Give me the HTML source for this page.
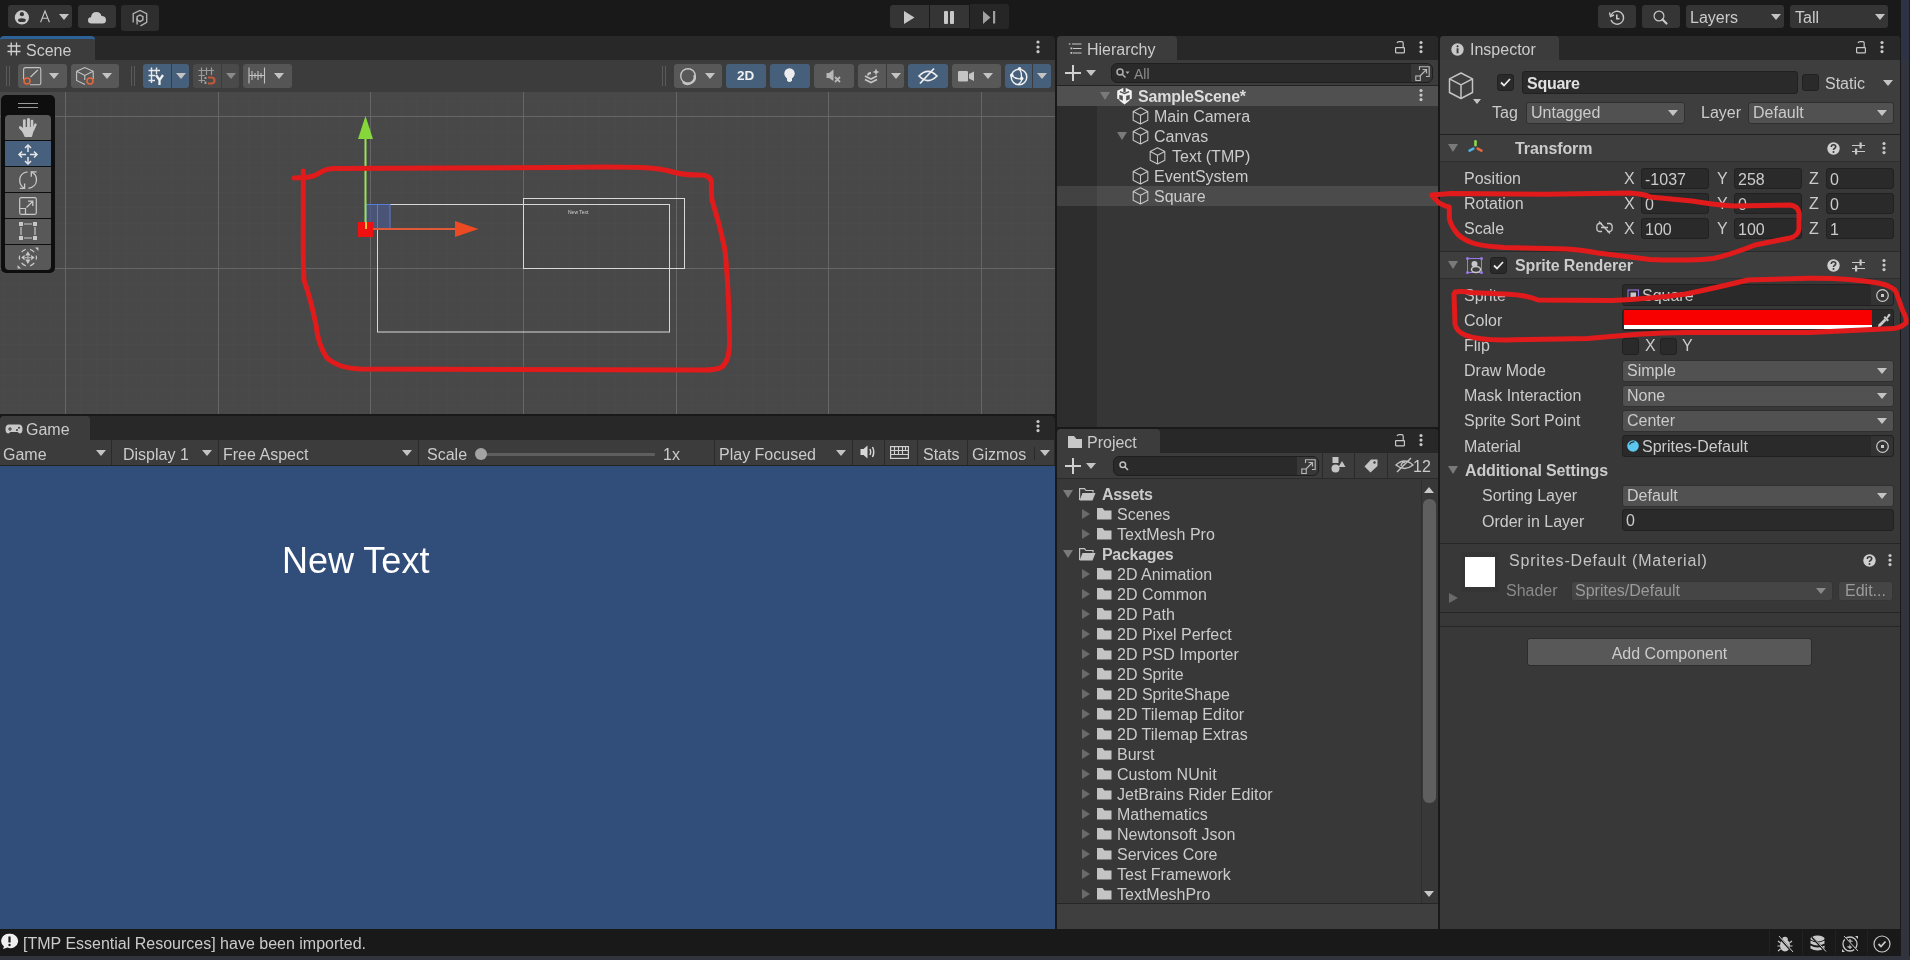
<!DOCTYPE html>
<html><head><meta charset="utf-8">
<style>
*{box-sizing:border-box;margin:0;padding:0}
html,body{width:1910px;height:960px;overflow:hidden;background:#191919;font-family:"Liberation Sans",sans-serif;color:#cbcbcb;font-size:15px;-webkit-font-smoothing:antialiased}
.a{position:absolute}
.t{position:absolute;white-space:pre;letter-spacing:0;line-height:20px;font-size:16px;margin-top:1px}
.btn{position:absolute;background:#353535;border-radius:3px}
.tri{position:absolute;width:0;height:0;border-left:5px solid transparent;border-right:5px solid transparent;border-top:6px solid #c4c4c4}
.trir{position:absolute;width:0;height:0;border-top:5px solid transparent;border-bottom:5px solid transparent;border-left:6px solid #6a6a6a}
.trid{position:absolute;width:0;height:0;border-left:5px solid transparent;border-right:5px solid transparent;border-top:6px solid #6a6a6a}
.panel{position:absolute;background:#383838;border-radius:4px 4px 0 0;overflow:hidden}
.hdr{position:absolute;left:0;top:0;right:0;height:24px;background:#282828}
.tab{position:absolute;left:0;top:0;height:24px;background:#3c3c3c;border-radius:4px 4px 0 0}
.tb{position:absolute;background:#585858;border-radius:3px}
.tbb{position:absolute;background:#46607c;border-radius:3px}
.fld{position:absolute;background:#2a2a2a;border:1px solid #212121;border-radius:3px}
.dd{position:absolute;background:#515151;border:1px solid #303030;border-radius:3px}
svg{position:absolute;overflow:visible}
</style></head><body><div id="root" style="position:absolute;left:0;top:0;width:1910px;height:960px;will-change:transform">

<!-- right window strip -->
<div class="a" style="left:1901px;top:0;width:8px;height:960px;background:#32343d"></div>
<div class="a" style="left:1901px;top:0;width:8px;height:60px;background:#2e3245"></div>
<div class="a" style="left:1909px;top:0;width:1px;height:960px;background:#1e1e1e"></div>
<div class="a" style="left:0;top:956px;width:1910px;height:4px;background:#32343d"></div>

<!-- ============ TOP TOOLBAR ============ -->
<div class="btn" style="left:8px;top:5px;width:64px;height:23px"></div>
<svg style="left:14px;top:10px" width="16" height="16" viewBox="0 0 16 16"><circle cx="7.9" cy="7.4" r="7.1" fill="#c8c8c8"/><circle cx="7.9" cy="4.2" r="2.1" fill="#353535"/><ellipse cx="7.9" cy="10.2" rx="3.9" ry="1.9" fill="#353535"/></svg>
<svg style="left:40px;top:10px" width="11" height="13" viewBox="0 0 11 13"><path d="M0.6 12.3L5 1L9.4 12.3M2.1 8.3H7.9" fill="none" stroke="#c8c8c8" stroke-width="1.1"/></svg>
<div class="tri" style="left:59px;top:14px"></div>
<div class="btn" style="left:78px;top:5px;width:38px;height:23px"></div>
<svg style="left:88px;top:11px" width="18" height="13" viewBox="0 0 18 13"><path d="M3.5 12.5 Q0 12.5 0 9.3 Q0 6.5 3 6.3 Q3.5 1 8.5 1 Q12.5 1 13.5 5 Q18 5 18 9 Q18 12.5 14.5 12.5Z" fill="#c8c8c8"/></svg>
<div class="btn" style="left:121px;top:5px;width:38px;height:26px;background:#2e2e2e"></div>
<svg style="left:132px;top:9px" width="16" height="18" viewBox="0 0 16 18"><path d="M1.2 13.6V4.7L8 1.4L14.7 4.7V13.3L8.5 16.9" fill="none" stroke="#b4b4b4" stroke-width="1.3"/><path d="M8 6L10.9 7.65V10.95L8 12.6L5.1 10.95V7.65Z" fill="none" stroke="#b4b4b4" stroke-width="1.4"/><path d="M5.1 9V15.5" stroke="#b4b4b4" stroke-width="1.4"/></svg>

<div class="btn" style="left:890px;top:5px;width:39px;height:23px;border-radius:3px 0 0 3px"></div>
<svg style="left:904px;top:11px" width="11" height="13" viewBox="0 0 11 13"><path d="M0 0 L10.5 6.5 L0 13Z" fill="#c8c8c8"/></svg>
<div class="btn" style="left:930px;top:5px;width:39px;height:23px;border-radius:0"></div>
<div class="a" style="left:944px;top:11px;width:3.5px;height:13px;background:#c8c8c8;border-radius:1px"></div>
<div class="a" style="left:950px;top:11px;width:4px;height:13px;background:#c8c8c8;border-radius:1px"></div>
<div class="btn" style="left:970px;top:4px;width:39px;height:25px;background:#262626;border-radius:0 3px 3px 0"></div>
<svg style="left:983px;top:11px" width="13" height="13" viewBox="0 0 13 13"><path d="M0 0 L7.5 6.5 L0 13Z" fill="#a0a0a0"/><rect x="10" y="0" width="2.2" height="12.5" fill="#a0a0a0"/></svg>

<div class="btn" style="left:1598px;top:5px;width:38px;height:23px"></div>
<svg style="left:1609px;top:10px" width="16" height="16" viewBox="0 0 16 16"><path d="M2.2 5 A6.5 6.5 0 1 1 2 10" fill="none" stroke="#c8c8c8" stroke-width="1.4"/><path d="M0.5 2.5 L1.5 6.5 L5 5" fill="none" stroke="#c8c8c8" stroke-width="1.4"/><path d="M7.8 4.5 V8.8 H10.5" fill="none" stroke="#c8c8c8" stroke-width="1.6"/></svg>
<div class="btn" style="left:1642px;top:5px;width:38px;height:23px"></div>
<svg style="left:1653px;top:10px" width="16" height="15" viewBox="0 0 16 15"><circle cx="6" cy="6" r="4.9" fill="none" stroke="#c8c8c8" stroke-width="1.2"/><path d="M9.5 9.5 L13.5 13.5" stroke="#c8c8c8" stroke-width="2.2" stroke-linecap="round"/></svg>
<div class="btn" style="left:1686px;top:5px;width:98px;height:23px"></div>
<div class="t" style="left:1690px;top:7px">Layers</div>
<div class="tri" style="left:1771px;top:14px"></div>
<div class="btn" style="left:1790px;top:5px;width:98px;height:23px"></div>
<div class="t" style="left:1795px;top:7px">Tall</div>
<div class="tri" style="left:1875px;top:14px"></div>

<!-- ============ SCENE PANEL ============ -->
<div class="a" style="left:0;top:36px;width:1055px;height:24px;background:#282828;border-radius:4px 4px 0 0"></div>
<div class="a" style="left:0;top:36px;width:95px;height:24px;background:#3c3c3c;border-top:3px solid #2c6296;border-radius:4px 4px 0 0"></div>
<svg style="left:7px;top:42px" width="14" height="14" viewBox="0 0 14 14"><path d="M4.2 0.5V13.5M9.5 0.5V13.5M0.5 4H13.5M0.5 9.5H13.5" stroke="#d0d0d0" stroke-width="1.3"/></svg>
<div class="t" style="left:26px;top:40px">Scene</div>
<svg style="left:1036px;top:40px" width="4" height="14" viewBox="0 0 4 14"><circle cx="2" cy="2" r="1.6" fill="#c8c8c8"/><circle cx="2" cy="7" r="1.6" fill="#c8c8c8"/><circle cx="2" cy="11.7" r="1.6" fill="#c8c8c8"/></svg>
<div class="a" style="left:0;top:60px;width:1055px;height:32px;background:#3c3c3c"></div>
<div class="a" style="left:6px;top:66px;width:1px;height:20px;background:#5a5a5a"></div>
<div class="a" style="left:9px;top:66px;width:1px;height:20px;background:#5a5a5a"></div>
<div class="tb" style="left:18px;top:64px;width:49px;height:24px"></div>
<svg style="left:23px;top:67px" width="20" height="20" viewBox="0 0 20 20"><path d="M0.6 12.5V2.5Q0.6 0.6 2.5 0.6H16Q17.8 0.6 17.8 2.5V16Q17.8 17.8 16 17.8H7" fill="none" stroke="#c4c4c4" stroke-width="1.1"/><path d="M7.5 10L14.8 3" stroke="#c4c4c4" stroke-width="1.2"/><circle cx="4" cy="14" r="3" fill="none" stroke="#e8683a" stroke-width="1.5"/></svg>
<div class="tri" style="left:49px;top:73px"></div>
<div class="tb" style="left:71px;top:64px;width:48px;height:24px"></div>
<svg style="left:76px;top:67px" width="20" height="20" viewBox="0 0 20 20"><path d="M0.6 4.3L8.8 0.5L17.2 4.3V12M0.6 4.3V13.5L9 17.6M0.6 4.3L8.8 8.5L17.2 4.3M8.8 8.5V13" fill="none" stroke="#c4c4c4" stroke-width="1.1"/><circle cx="14" cy="14" r="3" fill="none" stroke="#e8683a" stroke-width="1.5"/></svg>
<div class="tri" style="left:102px;top:73px"></div>
<div class="a" style="left:131px;top:66px;width:1px;height:20px;background:#5a5a5a"></div>
<div class="a" style="left:134px;top:66px;width:1px;height:20px;background:#5a5a5a"></div>
<div class="tbb" style="left:143px;top:64px;width:28px;height:24px;border-radius:3px 0 0 3px"></div>
<div class="tbb" style="left:172px;top:64px;width:17px;height:24px;border-radius:0 3px 3px 0"></div>
<svg style="left:148px;top:67px" width="18" height="19" viewBox="0 0 18 19"><path d="M3.5 0.5V16M8.5 0.5V7M0.5 3.5H12M0.5 8.5H7M0.5 13.5H7" stroke="#e8e8e8" stroke-width="1.4"/><path d="M8 8L11.5 13M15 8L11.5 13V18" fill="none" stroke="#f0f0f0" stroke-width="2.3"/></svg>
<div class="tri" style="left:176px;top:73px"></div>
<div class="tb" style="left:193px;top:64px;width:28px;height:24px;background:#4a4a4a;border-radius:3px 0 0 3px"></div>
<div class="tb" style="left:222px;top:64px;width:17px;height:24px;background:#4a4a4a;border-radius:0 3px 3px 0"></div>
<svg style="left:198px;top:67px" width="18" height="19" viewBox="0 0 18 19"><path d="M3.5 0.5V16M8.5 0.5V8M13.5 0.5V8M0.5 3.5H16M0.5 8.5H7M0.5 13.5H7" stroke="#9a9a9a" stroke-width="1.2"/><rect x="6.5" y="10" width="2" height="2" fill="#a0a0a0"/><rect x="6.5" y="14.5" width="2" height="2.5" fill="#a0a0a0"/><path d="M10 10.5H13.5A3 3 0 0 1 13.5 16.5H10" fill="none" stroke="#c0583a" stroke-width="2.2"/></svg>
<div class="trid" style="left:226px;top:73px;border-top-color:#8a8a8a"></div>
<div class="tb" style="left:243px;top:64px;width:49px;height:24px;background:#555"></div>
<svg style="left:248px;top:67px" width="18" height="18" viewBox="0 0 18 18"><path d="M1 0.5V16.5M16.5 0.5V16.5M1 8.5H16.5M4 4V13M7 6V11M10 4V13M13 6V11" stroke="#c4c4c4" stroke-width="1.1"/></svg>
<div class="tri" style="left:274px;top:73px"></div>

<div class="a" style="left:662px;top:66px;width:1px;height:20px;background:#5a5a5a"></div>
<div class="a" style="left:665px;top:66px;width:1px;height:20px;background:#5a5a5a"></div>
<div class="tb" style="left:674px;top:64px;width:48px;height:24px"></div>
<svg style="left:680px;top:67px" width="17" height="18" viewBox="0 0 17 18"><circle cx="8" cy="9" r="7.3" fill="none" stroke="#c4c4c4" stroke-width="1.4"/><path d="M14.5 8A7 7 0 0 1 3 15" fill="none" stroke="#c4c4c4" stroke-width="2.4"/></svg>
<div class="tri" style="left:705px;top:73px"></div>
<div class="tbb" style="left:726px;top:64px;width:40px;height:24px"></div>
<div class="a" style="left:737px;top:64px;font-weight:bold;font-size:13.5px;line-height:24px;color:#f0f0f0">2D</div>
<div class="tbb" style="left:770px;top:64px;width:40px;height:24px"></div>
<svg style="left:784px;top:68px" width="12" height="17" viewBox="0 0 12 17"><circle cx="5.5" cy="5.5" r="5.2" fill="#ececec"/><path d="M3 9.5H8V12.5Q5.5 15.5 3 12.5Z" fill="#ececec"/></svg>
<div class="tb" style="left:814px;top:64px;width:40px;height:24px"></div>
<svg style="left:826px;top:69px" width="16" height="15" viewBox="0 0 16 15"><path d="M0.5 4H3L7.5 0.5V12L3 9H0.5Z" fill="#b8b8b8"/><path d="M9 8L14 13M14 8L9 13" stroke="#b8b8b8" stroke-width="1.8"/></svg>
<div class="tb" style="left:858px;top:64px;width:28px;height:24px;border-radius:3px 0 0 3px"></div>
<div class="tb" style="left:887px;top:64px;width:17px;height:24px;border-radius:0 3px 3px 0"></div>
<svg style="left:864px;top:68px" width="16" height="16" viewBox="0 0 16 16"><path d="M1 8L7 11L13 8M1 11.5L7 14.5L13 11.5" fill="none" stroke="#c4c4c4" stroke-width="1.8"/><path d="M4 7.5Q4 5 7 5" fill="none" stroke="#c4c4c4" stroke-width="1.8"/><path d="M12 0.5L13 3L15.5 4L13 5L12 7.5L11 5L8.5 4L11 3Z" fill="#c4c4c4"/></svg>
<div class="tri" style="left:891px;top:73px"></div>
<div class="tbb" style="left:908px;top:64px;width:40px;height:24px"></div>
<svg style="left:918px;top:68px" width="20" height="16" viewBox="0 0 20 16"><path d="M1 8Q10 -1 19 8Q10 17 1 8Z" fill="none" stroke="#ececec" stroke-width="1.7"/><path d="M2 15.5L16 0.5" stroke="#ececec" stroke-width="1.8"/></svg>
<div class="tb" style="left:952px;top:64px;width:49px;height:24px"></div>
<svg style="left:958px;top:71px" width="17" height="11" viewBox="0 0 17 11"><rect x="0" y="0" width="10" height="10.5" rx="1.2" fill="#c4c4c4"/><path d="M11 3L16 0.5V10L11 7.5Z" fill="#c4c4c4"/></svg>
<div class="tri" style="left:983px;top:73px"></div>
<div class="tbb" style="left:1005px;top:64px;width:27px;height:24px;border-radius:3px 0 0 3px"></div>
<div class="tbb" style="left:1033px;top:64px;width:18px;height:24px;border-radius:0 3px 3px 0"></div>
<svg style="left:1010px;top:67px" width="18" height="19" viewBox="0 0 18 19"><circle cx="9" cy="10" r="7.8" fill="none" stroke="#f0f0f0" stroke-width="1.5"/><path d="M9.5 1.5Q12 6 11.7 11.5M1.5 8.5Q6.5 13 11.7 11.5M11.7 11.5Q12 15 8 17.5" fill="none" stroke="#f0f0f0" stroke-width="1.3"/><circle cx="9.5" cy="1.8" r="1.8" fill="#f0f0f0"/><circle cx="1.8" cy="8.3" r="1.8" fill="#f0f0f0"/><circle cx="11.7" cy="11.5" r="1.8" fill="#f0f0f0"/></svg>
<div class="tri" style="left:1037px;top:73px"></div>

<div class="a" style="left:0;top:92px;width:1055px;height:322px;background:#484848;overflow:hidden">
<svg style="left:0;top:0" width="1055" height="322" viewBox="0 0 1055 322">
<rect x="4" y="0" width="1" height="322" fill="#4a4a4a"/>
<rect x="19" y="0" width="1" height="322" fill="#4a4a4a"/>
<rect x="34" y="0" width="1" height="322" fill="#4a4a4a"/>
<rect x="50" y="0" width="1" height="322" fill="#4a4a4a"/>
<rect x="80" y="0" width="1" height="322" fill="#4a4a4a"/>
<rect x="96" y="0" width="1" height="322" fill="#4a4a4a"/>
<rect x="111" y="0" width="1" height="322" fill="#4a4a4a"/>
<rect x="126" y="0" width="1" height="322" fill="#4a4a4a"/>
<rect x="141" y="0" width="1" height="322" fill="#4a4a4a"/>
<rect x="157" y="0" width="1" height="322" fill="#4a4a4a"/>
<rect x="172" y="0" width="1" height="322" fill="#4a4a4a"/>
<rect x="187" y="0" width="1" height="322" fill="#4a4a4a"/>
<rect x="202" y="0" width="1" height="322" fill="#4a4a4a"/>
<rect x="233" y="0" width="1" height="322" fill="#4a4a4a"/>
<rect x="248" y="0" width="1" height="322" fill="#4a4a4a"/>
<rect x="263" y="0" width="1" height="322" fill="#4a4a4a"/>
<rect x="279" y="0" width="1" height="322" fill="#4a4a4a"/>
<rect x="294" y="0" width="1" height="322" fill="#4a4a4a"/>
<rect x="309" y="0" width="1" height="322" fill="#4a4a4a"/>
<rect x="325" y="0" width="1" height="322" fill="#4a4a4a"/>
<rect x="340" y="0" width="1" height="322" fill="#4a4a4a"/>
<rect x="355" y="0" width="1" height="322" fill="#4a4a4a"/>
<rect x="386" y="0" width="1" height="322" fill="#4a4a4a"/>
<rect x="401" y="0" width="1" height="322" fill="#4a4a4a"/>
<rect x="416" y="0" width="1" height="322" fill="#4a4a4a"/>
<rect x="431" y="0" width="1" height="322" fill="#4a4a4a"/>
<rect x="447" y="0" width="1" height="322" fill="#4a4a4a"/>
<rect x="462" y="0" width="1" height="322" fill="#4a4a4a"/>
<rect x="477" y="0" width="1" height="322" fill="#4a4a4a"/>
<rect x="492" y="0" width="1" height="322" fill="#4a4a4a"/>
<rect x="508" y="0" width="1" height="322" fill="#4a4a4a"/>
<rect x="538" y="0" width="1" height="322" fill="#4a4a4a"/>
<rect x="554" y="0" width="1" height="322" fill="#4a4a4a"/>
<rect x="569" y="0" width="1" height="322" fill="#4a4a4a"/>
<rect x="584" y="0" width="1" height="322" fill="#4a4a4a"/>
<rect x="599" y="0" width="1" height="322" fill="#4a4a4a"/>
<rect x="615" y="0" width="1" height="322" fill="#4a4a4a"/>
<rect x="630" y="0" width="1" height="322" fill="#4a4a4a"/>
<rect x="645" y="0" width="1" height="322" fill="#4a4a4a"/>
<rect x="660" y="0" width="1" height="322" fill="#4a4a4a"/>
<rect x="691" y="0" width="1" height="322" fill="#4a4a4a"/>
<rect x="706" y="0" width="1" height="322" fill="#4a4a4a"/>
<rect x="721" y="0" width="1" height="322" fill="#4a4a4a"/>
<rect x="737" y="0" width="1" height="322" fill="#4a4a4a"/>
<rect x="752" y="0" width="1" height="322" fill="#4a4a4a"/>
<rect x="767" y="0" width="1" height="322" fill="#4a4a4a"/>
<rect x="783" y="0" width="1" height="322" fill="#4a4a4a"/>
<rect x="798" y="0" width="1" height="322" fill="#4a4a4a"/>
<rect x="813" y="0" width="1" height="322" fill="#4a4a4a"/>
<rect x="844" y="0" width="1" height="322" fill="#4a4a4a"/>
<rect x="859" y="0" width="1" height="322" fill="#4a4a4a"/>
<rect x="874" y="0" width="1" height="322" fill="#4a4a4a"/>
<rect x="889" y="0" width="1" height="322" fill="#4a4a4a"/>
<rect x="905" y="0" width="1" height="322" fill="#4a4a4a"/>
<rect x="920" y="0" width="1" height="322" fill="#4a4a4a"/>
<rect x="935" y="0" width="1" height="322" fill="#4a4a4a"/>
<rect x="950" y="0" width="1" height="322" fill="#4a4a4a"/>
<rect x="966" y="0" width="1" height="322" fill="#4a4a4a"/>
<rect x="996" y="0" width="1" height="322" fill="#4a4a4a"/>
<rect x="1012" y="0" width="1" height="322" fill="#4a4a4a"/>
<rect x="1027" y="0" width="1" height="322" fill="#4a4a4a"/>
<rect x="1042" y="0" width="1" height="322" fill="#4a4a4a"/>
<rect x="0" y="9" width="1055" height="1" fill="#4a4a4a"/>
<rect x="0" y="39" width="1055" height="1" fill="#4a4a4a"/>
<rect x="0" y="54" width="1055" height="1" fill="#4a4a4a"/>
<rect x="0" y="70" width="1055" height="1" fill="#4a4a4a"/>
<rect x="0" y="85" width="1055" height="1" fill="#4a4a4a"/>
<rect x="0" y="100" width="1055" height="1" fill="#4a4a4a"/>
<rect x="0" y="115" width="1055" height="1" fill="#4a4a4a"/>
<rect x="0" y="131" width="1055" height="1" fill="#4a4a4a"/>
<rect x="0" y="146" width="1055" height="1" fill="#4a4a4a"/>
<rect x="0" y="161" width="1055" height="1" fill="#4a4a4a"/>
<rect x="0" y="191" width="1055" height="1" fill="#4a4a4a"/>
<rect x="0" y="207" width="1055" height="1" fill="#4a4a4a"/>
<rect x="0" y="222" width="1055" height="1" fill="#4a4a4a"/>
<rect x="0" y="237" width="1055" height="1" fill="#4a4a4a"/>
<rect x="0" y="252" width="1055" height="1" fill="#4a4a4a"/>
<rect x="0" y="267" width="1055" height="1" fill="#4a4a4a"/>
<rect x="0" y="283" width="1055" height="1" fill="#4a4a4a"/>
<rect x="0" y="298" width="1055" height="1" fill="#4a4a4a"/>
<rect x="0" y="313" width="1055" height="1" fill="#4a4a4a"/>
<rect x="65" y="0" width="1" height="322" fill="#666666"/>
<rect x="218" y="0" width="1" height="322" fill="#666666"/>
<rect x="370" y="0" width="1" height="322" fill="#666666"/>
<rect x="523" y="0" width="1" height="322" fill="#666666"/>
<rect x="676" y="0" width="1" height="322" fill="#666666"/>
<rect x="828" y="0" width="1" height="322" fill="#666666"/>
<rect x="981" y="0" width="1" height="322" fill="#666666"/>
<rect x="0" y="24" width="1055" height="1" fill="#666666"/>
<rect x="0" y="176" width="1055" height="1" fill="#666666"/>
</svg>
</div>

<!-- tool panel -->
<div class="a" style="left:1px;top:95px;width:54px;height:178px;background:#0e0e0e;border-radius:5px"></div>
<div class="a" style="left:18px;top:103px;width:20px;height:1px;background:#9a9a9a"></div>
<div class="a" style="left:18px;top:107px;width:20px;height:1px;background:#9a9a9a"></div>
<div class="a" style="left:5px;top:115px;width:46px;height:25px;background:#585858;border-radius:4px 4px 0 0"></div>
<div class="a" style="left:5px;top:141px;width:46px;height:25px;background:#46607e"></div>
<div class="a" style="left:5px;top:167px;width:46px;height:25px;background:#585858"></div>
<div class="a" style="left:5px;top:193px;width:46px;height:25px;background:#585858"></div>
<div class="a" style="left:5px;top:219px;width:46px;height:25px;background:#585858"></div>
<div class="a" style="left:5px;top:245px;width:46px;height:25px;background:#585858;border-radius:0 0 4px 4px"></div>
<svg style="left:19px;top:118px" width="18" height="20" viewBox="0 0 18 20"><g stroke="#c8c8c8" stroke-linecap="round" fill="none"><path d="M5.3 2.6V10" stroke-width="2.7"/><path d="M9.5 1.4V10" stroke-width="2.9"/><path d="M13 3V10" stroke-width="2.6"/><path d="M16.5 6.5L14 12" stroke-width="2.4"/><path d="M1.2 9.5L5 13.5" stroke-width="2.6"/></g><path d="M3.8 9H14.5L14.8 12.5L12.8 19H5.8L3 13Z" fill="#c8c8c8"/></svg>
<svg style="left:18px;top:144px" width="20" height="21" viewBox="0 0 20 21"><path d="M10 1V8M10 13V20M1 10.5H8M12 10.5H19" stroke="#e8e8e8" stroke-width="1.5"/><path d="M7 4L10 1L13 4M7 17L10 20L13 17M4 7.5L1 10.5L4 13.5M16 7.5L19 10.5L16 13.5" fill="none" stroke="#e8e8e8" stroke-width="1.5"/></svg>
<svg style="left:19px;top:171px" width="19" height="19" viewBox="0 0 19 19"><g fill="none" stroke="#c8c8c8" stroke-width="1.3"><path d="M8.5 0.8C3.5 1.5 0.7 5 0.7 9C0.7 12.8 2.8 16 5.6 17.4"/><path d="M0.8 17.4H5.6V12.4"/><path d="M9.4 17.4C14.5 16.6 17.5 13 17.5 9C17.5 5.2 15.3 2 12.3 0.8"/><path d="M17.6 0.8H12.3V5.7"/></g></svg>
<svg style="left:19px;top:197px" width="18" height="18" viewBox="0 0 18 18"><rect x="0.7" y="0.7" width="16.6" height="16.6" rx="1.5" fill="none" stroke="#c8c8c8" stroke-width="1.2"/><path d="M0.7 11.5H6.5V17.3" fill="none" stroke="#c8c8c8" stroke-width="1.2"/><path d="M7.5 10.5L13.5 4.5M9 4.2H13.8V9" fill="none" stroke="#c8c8c8" stroke-width="1.3"/></svg>
<svg style="left:19px;top:222px" width="18" height="18" viewBox="0 0 18 18"><path d="M5 2H13M5 16H13M2 5V13M16 5V13" stroke="#c8c8c8" stroke-width="1.2"/><rect x="0" y="0" width="4" height="4" fill="#c8c8c8"/><rect x="14" y="0" width="4" height="4" fill="#c8c8c8"/><rect x="0" y="14" width="4" height="4" fill="#c8c8c8"/><rect x="14" y="14" width="4" height="4" fill="#c8c8c8"/></svg>
<svg style="left:17px;top:247px" width="22" height="22" viewBox="0 0 22 22"><g fill="none" stroke="#c8c8c8" stroke-width="1.2"><path d="M4.6 5.2A8.5 8.5 0 0 1 8.8 2.4"/><path d="M13 2.4A8.5 8.5 0 0 1 17.2 5.2"/><path d="M19.2 8.6A8.5 8.5 0 0 1 19.2 12.6"/><path d="M2.6 8.6A8.5 8.5 0 0 0 2.6 12.6"/><path d="M4.6 16A8.5 8.5 0 0 0 8.8 18.8"/><path d="M13 18.8A8.5 8.5 0 0 0 17.2 16"/></g><path d="M10.9 4.2L13.5 8.6H8.3Z M10.9 17L13.5 12.6H8.3Z M4.2 10.6L7.6 8V13.2Z M17.6 10.6L14.2 8V13.2Z" fill="#c8c8c8"/><path d="M10.9 8.6V12.6M7.6 10.6H14.2" stroke="#a8a8a8" stroke-width="1.4"/><path d="M18 0.6H21.4V4Z M0.6 18V21.4H4Z" fill="#c8c8c8"/></svg>

<!-- scene objects -->
<svg style="left:0;top:0" width="1055" height="414" viewBox="0 0 1055 414">
<rect x="377.5" y="204.5" width="292" height="127.5" fill="none" stroke="#d8d8d8" stroke-width="1"/>
<rect x="523.5" y="198.5" width="161" height="70" fill="none" stroke="#d8d8d8" stroke-width="1"/>
<rect x="366" y="204.5" width="24" height="24" fill="#4a5a8a" fill-opacity="0.7" stroke="#5a7adc" stroke-width="1"/>
<line x1="377.5" y1="204" x2="377.5" y2="229" stroke="#5a7adc" stroke-width="1"/>
<text x="568" y="214" font-family="Liberation Sans" font-size="5" fill="#d0d0d0">New Text</text>
<line x1="365.5" y1="137" x2="365.5" y2="229" stroke="#9ae05a" stroke-width="2"/>
<path d="M358 139L365.5 116L373 139Z" fill="#86d83a"/>
<line x1="366" y1="229" x2="457" y2="229" stroke="#e05a3a" stroke-width="2"/>
<path d="M455 221L478.5 229L455 237Z" fill="#ec4a22"/>
<rect x="358" y="222" width="15" height="15" fill="#f01010"/>
<line x1="366" y1="222" x2="366" y2="229" stroke="#ffff40" stroke-width="1.5"/>
<path d="M294 178L305 177.5Q314 177 321 172Q327 168.5 335 168.5L560 167.5Q610 166.5 640 167.5Q660 168 675 172.5Q685 175 700 175Q711 175 711.5 183Q711 192 712 200Q720 225 725 250Q729 290 729.5 340Q730 360 722 367Q716 370.5 700 370L360 369Q338 368 327 358Q318 345 316 325Q311 300 304 280Q303 262 303.3 220L303.3 171" fill="none" stroke="#e11b1b" stroke-width="5" stroke-linecap="round" stroke-linejoin="round"/>
</svg>

<!-- ============ GAME PANEL ============ -->
<div class="a" style="left:0;top:416px;width:1055px;height:24px;background:#282828;border-radius:4px 4px 0 0"></div>
<div class="a" style="left:0;top:416px;width:90px;height:24px;background:#3c3c3c;border-radius:4px 4px 0 0"></div>
<svg style="left:5px;top:424px" width="18" height="10" viewBox="0 0 18 10"><path d="M4 0.5H14Q17.5 0.5 17.5 5Q17.5 9.5 14.5 9.5L12.5 8H5.5L3.5 9.5Q0.5 9.5 0.5 5Q0.5 0.5 4 0.5Z" fill="#c8c8c8"/><path d="M3 5H7M5 3V7" stroke="#3c3c3c" stroke-width="1.1"/><circle cx="12" cy="6" r="1" fill="#3c3c3c"/><circle cx="14" cy="3.8" r="1" fill="#3c3c3c"/></svg>
<div class="t" style="left:26px;top:419px">Game</div>
<svg style="left:1036px;top:420px" width="4" height="13" viewBox="0 0 4 13"><circle cx="2" cy="1.5" r="1.6" fill="#c8c8c8"/><circle cx="2" cy="6.05" r="1.6" fill="#c8c8c8"/><circle cx="2" cy="10.6" r="1.6" fill="#c8c8c8"/></svg>
<div class="a" style="left:0;top:440px;width:1055px;height:25px;background:#3c3c3c"></div>
<div class="a" style="left:0;top:465px;width:1055px;height:1px;background:#232323"></div>
<div class="t" style="left:3px;top:444px">Game</div>
<div class="tri" style="left:96px;top:450px"></div>
<div class="a" style="left:111px;top:440px;width:1px;height:25px;background:#2a2a2a"></div>
<div class="t" style="left:123px;top:444px">Display 1</div>
<div class="tri" style="left:202px;top:450px"></div>
<div class="a" style="left:218px;top:440px;width:1px;height:25px;background:#2a2a2a"></div>
<div class="t" style="left:223px;top:444px">Free Aspect</div>
<div class="tri" style="left:402px;top:450px"></div>
<div class="a" style="left:418px;top:440px;width:1px;height:25px;background:#2a2a2a"></div>
<div class="t" style="left:427px;top:444px">Scale</div>
<div class="a" style="left:481px;top:453px;width:174px;height:3px;background:#5e5e5e;border-radius:1px"></div>
<div class="a" style="left:475px;top:448px;width:12px;height:12px;background:#a4a4a4;border-radius:50%"></div>
<div class="t" style="left:663px;top:444px">1x</div>
<div class="a" style="left:714px;top:440px;width:1px;height:25px;background:#2a2a2a"></div>
<div class="t" style="left:719px;top:444px">Play Focused</div>
<div class="tri" style="left:836px;top:450px"></div>
<div class="a" style="left:852px;top:440px;width:1px;height:25px;background:#2a2a2a"></div>
<svg style="left:860px;top:445px" width="16" height="14" viewBox="0 0 16 14"><path d="M0.5 4H3.5L7.5 0.5V13.5L3.5 10H0.5Z" fill="#d8d8d8"/><path d="M10 4Q11.5 7 10 10M12.5 2Q15 7 12.5 12" fill="none" stroke="#d8d8d8" stroke-width="1.5"/></svg>
<div class="a" style="left:884px;top:440px;width:1px;height:25px;background:#2a2a2a"></div>
<svg style="left:890px;top:446px" width="19" height="13" viewBox="0 0 19 13"><rect x="0.6" y="0.6" width="17.8" height="11.8" fill="none" stroke="#d0d0d0" stroke-width="1.2"/><path d="M0.6 4.5H18.4M0.6 8.5H18.4M4.5 0.6V8.5M8.5 0.6V8.5M12.5 0.6V8.5M15.5 0.6V4.5" stroke="#d0d0d0" stroke-width="1.1"/></svg>
<div class="a" style="left:917px;top:440px;width:1px;height:25px;background:#2a2a2a"></div>
<div class="t" style="left:923px;top:444px">Stats</div>
<div class="a" style="left:967px;top:440px;width:1px;height:25px;background:#2a2a2a"></div>
<div class="t" style="left:972px;top:444px">Gizmos</div>
<div class="a" style="left:1034px;top:447px;width:1px;height:13px;background:#2a2a2a"></div>
<div class="tri" style="left:1040px;top:450px"></div>
<div class="a" style="left:1054px;top:440px;width:1px;height:25px;background:#2a2a2a"></div>
<div class="a" style="left:0;top:466px;width:1055px;height:463px;background:#314d79"></div>
<div class="a" style="left:282px;top:541px;font-size:36px;line-height:40px;color:#ffffff;white-space:pre">New Text</div>

<!-- ============ HIERARCHY ============ -->
<div class="a" style="left:1057px;top:36px;width:381px;height:391px;background:#383838;border-radius:4px 4px 0 0;overflow:hidden"></div>
<div class="a" style="left:1057px;top:36px;width:381px;height:24px;background:#282828;border-radius:4px 4px 0 0"></div>
<div class="a" style="left:1057px;top:36px;width:120px;height:24px;background:#3c3c3c;border-radius:4px 4px 0 0"></div>
<svg style="left:1068px;top:43px" width="14" height="11" viewBox="0 0 14 11"><path d="M4 1H13.5M5 5.5H13.5M5 10H13.5" stroke="#c8c8c8" stroke-width="1.2"/><path d="M0.3 1L2.3 0V2Z" fill="#c8c8c8"/><rect x="2.5" y="4.5" width="1.8" height="1.8" fill="#c8c8c8"/><rect x="2.5" y="9" width="1.8" height="1.8" fill="#c8c8c8"/></svg>
<div class="t" style="left:1087px;top:39px">Hierarchy</div>
<svg style="left:1395px;top:41px" width="10" height="12" viewBox="0 0 10 12"><rect x="0.6" y="6.6" width="8.8" height="5.2" rx="0.5" fill="none" stroke="#c8c8c8" stroke-width="1.2"/><path d="M2 1.9Q2.6 0.7 4 0.7H6.8Q8.2 0.7 8.2 2.2V6.5" fill="none" stroke="#c8c8c8" stroke-width="1.2"/></svg>
<svg style="left:1419px;top:41px" width="4" height="13" viewBox="0 0 4 13"><circle cx="2" cy="1.5" r="1.6" fill="#c8c8c8"/><circle cx="2" cy="6.05" r="1.6" fill="#c8c8c8"/><circle cx="2" cy="10.6" r="1.6" fill="#c8c8c8"/></svg>
<div class="a" style="left:1057px;top:60px;width:381px;height:25px;background:#3c3c3c"></div>
<div class="a" style="left:1057px;top:85px;width:381px;height:1px;background:#232323"></div>
<svg style="left:1065px;top:65px" width="16" height="16" viewBox="0 0 16 16"><path d="M8 0V16M0 8H16" stroke="#d0d0d0" stroke-width="2"/></svg>
<div class="tri" style="left:1086px;top:70px"></div>
<div class="a" style="left:1111px;top:63px;width:322px;height:20px;background:#2a2a2a;border:1px solid #1f1f1f;border-radius:6px"></div>
<div class="a" style="left:1411px;top:64px;width:21px;height:18px;background:#383838;border-radius:0 5px 5px 0"></div>
<svg style="left:1415px;top:66px" width="15" height="15" viewBox="0 0 15 15"><path d="M4.5 4V0.8H14.2V10.5H11" fill="none" stroke="#b8b8b8" stroke-width="1.1"/><rect x="0.8" y="10" width="4.5" height="4.5" fill="none" stroke="#b8b8b8" stroke-width="1.1"/><path d="M5 10L11.5 3.5M7.5 3.5H11.5V7.5" fill="none" stroke="#b8b8b8" stroke-width="1.2"/></svg>
<svg style="left:1116px;top:68px" width="15" height="11" viewBox="0 0 15 11"><circle cx="4" cy="4" r="3" fill="none" stroke="#b0b0b0" stroke-width="1.5"/><path d="M6 6L9.5 9.5" stroke="#b0b0b0" stroke-width="1.5"/><path d="M9.5 3.5H13.5L11.5 6Z" fill="#b0b0b0"/></svg>
<div class="t" style="left:1134px;top:63px;font-size:14px;color:#8c8c8c">All</div>
<div class="a" style="left:1057px;top:86px;width:40px;height:341px;background:#2d2d2d"></div><div class="a" style="left:1097px;top:106px;width:341px;height:321px;background:#363636"></div>
<div class="a" style="left:1057px;top:86px;width:381px;height:20px;background:#505050"></div>
<div class="a" style="left:1057px;top:186px;width:381px;height:20px;background:#4b4b4b"></div><div class="a" style="left:1057px;top:186px;width:40px;height:20px;background:#424242"></div>
<div class="trid" style="left:1100px;top:92px;border-width:8px 5px 0 5px;border-top-color:#7a7a7a"></div>
<svg style="left:1117px;top:87px" width="16" height="18" viewBox="0 0 16 18"><path d="M7.5 0.3L14.8 3.8V11.8L7.5 17.5L0.2 11.8V3.8Z" fill="#f2f2f2"/><rect x="6.3" y="0" width="2.4" height="5.2" fill="#505050"/><path d="M3 4.6L7.5 6.6L12 4.6" fill="none" stroke="#505050" stroke-width="1.4"/><path d="M2.3 8L5.8 8.8V13.8L2.3 12Z M12.7 8L9.2 8.8V13.8L12.7 12Z" fill="#505050"/><path d="M0 12.2L2.5 13.2M15 12.2L12.5 13.2" stroke="#505050" stroke-width="1.2"/></svg>
<div class="t" style="left:1138px;top:86px;font-weight:bold;color:#dcdcdc;letter-spacing:-0.2px">SampleScene*</div>
<svg style="left:1419px;top:89px" width="4" height="13" viewBox="0 0 4 13"><circle cx="2" cy="1.5" r="1.6" fill="#c8c8c8"/><circle cx="2" cy="6.05" r="1.6" fill="#c8c8c8"/><circle cx="2" cy="10.6" r="1.6" fill="#c8c8c8"/></svg>
<svg style="left:1132px;top:107px" width="17" height="18" viewBox="0 0 17 18"><path d="M8.5 0.8L15.8 4.5V13.2L8.5 17L1.2 13.2V4.5Z M1.2 4.5L8.5 8.3L15.8 4.5 M8.5 8.3V17" fill="none" stroke="#c4c4c4" stroke-width="1.1" stroke-linejoin="round"/></svg>
<div class="t" style="left:1154px;top:106px">Main Camera</div>
<div class="trid" style="left:1117px;top:132px;border-width:8px 5px 0 5px;border-top-color:#7a7a7a"></div>
<svg style="left:1132px;top:127px" width="17" height="18" viewBox="0 0 17 18"><path d="M8.5 0.8L15.8 4.5V13.2L8.5 17L1.2 13.2V4.5Z M1.2 4.5L8.5 8.3L15.8 4.5 M8.5 8.3V17" fill="none" stroke="#c4c4c4" stroke-width="1.1" stroke-linejoin="round"/></svg>
<div class="t" style="left:1154px;top:126px">Canvas</div>
<svg style="left:1149px;top:147px" width="17" height="18" viewBox="0 0 17 18"><path d="M8.5 0.8L15.8 4.5V13.2L8.5 17L1.2 13.2V4.5Z M1.2 4.5L8.5 8.3L15.8 4.5 M8.5 8.3V17" fill="none" stroke="#c4c4c4" stroke-width="1.1" stroke-linejoin="round"/></svg>
<div class="t" style="left:1172px;top:146px">Text (TMP)</div>
<svg style="left:1132px;top:167px" width="17" height="18" viewBox="0 0 17 18"><path d="M8.5 0.8L15.8 4.5V13.2L8.5 17L1.2 13.2V4.5Z M1.2 4.5L8.5 8.3L15.8 4.5 M8.5 8.3V17" fill="none" stroke="#c4c4c4" stroke-width="1.1" stroke-linejoin="round"/></svg>
<div class="t" style="left:1154px;top:166px">EventSystem</div>
<svg style="left:1132px;top:187px" width="17" height="18" viewBox="0 0 17 18"><path d="M8.5 0.8L15.8 4.5V13.2L8.5 17L1.2 13.2V4.5Z M1.2 4.5L8.5 8.3L15.8 4.5 M8.5 8.3V17" fill="none" stroke="#c4c4c4" stroke-width="1.1" stroke-linejoin="round"/></svg>
<div class="t" style="left:1154px;top:186px">Square</div>

<!-- ============ PROJECT ============ -->
<div class="a" style="left:1057px;top:429px;width:381px;height:500px;background:#383838;border-radius:4px 4px 0 0"></div>
<div class="a" style="left:1057px;top:429px;width:381px;height:24px;background:#282828;border-radius:4px 4px 0 0"></div>
<div class="a" style="left:1057px;top:429px;width:103px;height:24px;background:#3c3c3c;border-radius:4px 4px 0 0"></div>
<svg style="left:1068px;top:436px" width="14" height="12" viewBox="0 0 14 12"><path d="M0 0H6L8.5 3H14V12H0Z" fill="#c8c8c8"/></svg>
<div class="t" style="left:1087px;top:432px">Project</div>
<svg style="left:1395px;top:434px" width="10" height="12" viewBox="0 0 10 12"><rect x="0.6" y="6.6" width="8.8" height="5.2" rx="0.5" fill="none" stroke="#c8c8c8" stroke-width="1.2"/><path d="M2 1.9Q2.6 0.7 4 0.7H6.8Q8.2 0.7 8.2 2.2V6.5" fill="none" stroke="#c8c8c8" stroke-width="1.2"/></svg>
<svg style="left:1419px;top:434px" width="4" height="13" viewBox="0 0 4 13"><circle cx="2" cy="1.5" r="1.6" fill="#c8c8c8"/><circle cx="2" cy="6.05" r="1.6" fill="#c8c8c8"/><circle cx="2" cy="10.6" r="1.6" fill="#c8c8c8"/></svg>
<div class="a" style="left:1057px;top:453px;width:381px;height:25px;background:#3c3c3c"></div>
<div class="a" style="left:1057px;top:478px;width:381px;height:1px;background:#2a2a2a"></div>
<svg style="left:1065px;top:458px" width="16" height="16" viewBox="0 0 16 16"><path d="M8 0V16M0 8H16" stroke="#d0d0d0" stroke-width="2"/></svg>
<div class="tri" style="left:1086px;top:463px"></div>
<div class="a" style="left:1113px;top:456px;width:206px;height:20px;background:#2a2a2a;border:1px solid #1f1f1f;border-radius:6px"></div>
<div class="a" style="left:1297px;top:457px;width:21px;height:18px;background:#383838;border-radius:0 5px 5px 0"></div>
<svg style="left:1301px;top:459px" width="15" height="15" viewBox="0 0 15 15"><path d="M4.5 4V0.8H14.2V10.5H11" fill="none" stroke="#b8b8b8" stroke-width="1.1"/><rect x="0.8" y="10" width="4.5" height="4.5" fill="none" stroke="#b8b8b8" stroke-width="1.1"/><path d="M5 10L11.5 3.5M7.5 3.5H11.5V7.5" fill="none" stroke="#b8b8b8" stroke-width="1.2"/></svg>
<svg style="left:1119px;top:461px" width="10" height="10" viewBox="0 0 10 10"><circle cx="3.8" cy="3.8" r="2.8" fill="none" stroke="#c0c0c0" stroke-width="1.5"/><path d="M5.8 5.8L9 9" stroke="#c0c0c0" stroke-width="1.6"/></svg>
<div class="a" style="left:1322px;top:453px;width:1px;height:25px;background:#2a2a2a"></div>
<div class="a" style="left:1354px;top:453px;width:1px;height:25px;background:#2a2a2a"></div>
<div class="a" style="left:1387px;top:453px;width:1px;height:25px;background:#2a2a2a"></div>
<svg style="left:1331px;top:457px" width="15" height="16" viewBox="0 0 15 16"><rect x="1.5" y="0" width="6" height="6" fill="#c4c4c4"/><circle cx="4.5" cy="11.5" r="4" fill="#c4c4c4"/><path d="M11 4L14.5 10H7.5Z" fill="#c4c4c4"/></svg>
<svg style="left:1364px;top:459px" width="14" height="14" viewBox="0 0 14 14"><path d="M7 0.5H13.5V7L6.5 13.5L0.5 7.5Z" fill="#c4c4c4"/><circle cx="10.5" cy="3.5" r="1.2" fill="#3c3c3c"/></svg>
<svg style="left:1395px;top:457px" width="19" height="16" viewBox="0 0 19 16"><path d="M1 8Q9.5 0 18 8Q9.5 15 1 8Z" fill="none" stroke="#c4c4c4" stroke-width="1.4"/><path d="M2 15L16 1" stroke="#c4c4c4" stroke-width="1.4"/><path d="M6 9Q6.5 5 10 5" fill="none" stroke="#c4c4c4" stroke-width="1.3"/></svg>
<div class="t" style="left:1413px;top:456px;letter-spacing:0">12</div>
<div class="a" style="left:1421px;top:479px;width:1px;height:424px;background:#2f2f2f"></div>
<div class="a" style="left:1423px;top:499px;width:13px;height:304px;background:#5f5f5f;border-radius:6px"></div>
<div class="a" style="left:1424px;top:487px;width:0;height:0;border-left:5.5px solid transparent;border-right:5.5px solid transparent;border-bottom:6px solid #c8c8c8"></div>
<div class="tri" style="left:1424px;top:891px;border-width:6px 5.5px 0 5.5px;border-top-color:#c8c8c8"></div>
<div class="a" style="left:1057px;top:903px;width:381px;height:1px;background:#262626"></div>
<div class="a" style="left:1057px;top:904px;width:381px;height:25px;background:#3f3f3f"></div>
<div class="trid" style="left:1063px;top:490px;border-width:8px 5px 0 5px;border-top-color:#7a7a7a"></div>
<svg style="left:1079px;top:488px" width="17" height="13" viewBox="0 0 17 13"><path d="M0.6 12V0.6H5.5L7 2.5H14V4.5" fill="none" stroke="#c4c4c4" stroke-width="1.2"/><path d="M0.6 12.4L3.5 5H16.5L13.5 12.4Z" fill="#c4c4c4"/></svg>
<div class="t" style="left:1102px;top:484px;font-weight:bold;letter-spacing:-0.3px">Assets</div>
<div class="trir" style="left:1082px;top:509px;border-width:5px 0 5px 8px"></div>
<svg style="left:1097px;top:508px" width="15" height="12" viewBox="0 0 15 12"><path d="M0 0H5.5L7.5 2.5H14.5V11.5H0Z" fill="#c4c4c4"/></svg>
<div class="t" style="left:1117px;top:504px">Scenes</div>
<div class="trir" style="left:1082px;top:529px;border-width:5px 0 5px 8px"></div>
<svg style="left:1097px;top:528px" width="15" height="12" viewBox="0 0 15 12"><path d="M0 0H5.5L7.5 2.5H14.5V11.5H0Z" fill="#c4c4c4"/></svg>
<div class="t" style="left:1117px;top:524px">TextMesh Pro</div>
<div class="trid" style="left:1063px;top:550px;border-width:8px 5px 0 5px;border-top-color:#7a7a7a"></div>
<svg style="left:1079px;top:548px" width="17" height="13" viewBox="0 0 17 13"><path d="M0.6 12V0.6H5.5L7 2.5H14V4.5" fill="none" stroke="#c4c4c4" stroke-width="1.2"/><path d="M0.6 12.4L3.5 5H16.5L13.5 12.4Z" fill="#c4c4c4"/></svg>
<div class="t" style="left:1102px;top:544px;font-weight:bold;letter-spacing:-0.3px">Packages</div>
<div class="trir" style="left:1082px;top:569px;border-width:5px 0 5px 8px"></div>
<svg style="left:1097px;top:568px" width="15" height="12" viewBox="0 0 15 12"><path d="M0 0H5.5L7.5 2.5H14.5V11.5H0Z" fill="#c4c4c4"/></svg>
<div class="t" style="left:1117px;top:564px">2D Animation</div>
<div class="trir" style="left:1082px;top:589px;border-width:5px 0 5px 8px"></div>
<svg style="left:1097px;top:588px" width="15" height="12" viewBox="0 0 15 12"><path d="M0 0H5.5L7.5 2.5H14.5V11.5H0Z" fill="#c4c4c4"/></svg>
<div class="t" style="left:1117px;top:584px">2D Common</div>
<div class="trir" style="left:1082px;top:609px;border-width:5px 0 5px 8px"></div>
<svg style="left:1097px;top:608px" width="15" height="12" viewBox="0 0 15 12"><path d="M0 0H5.5L7.5 2.5H14.5V11.5H0Z" fill="#c4c4c4"/></svg>
<div class="t" style="left:1117px;top:604px">2D Path</div>
<div class="trir" style="left:1082px;top:629px;border-width:5px 0 5px 8px"></div>
<svg style="left:1097px;top:628px" width="15" height="12" viewBox="0 0 15 12"><path d="M0 0H5.5L7.5 2.5H14.5V11.5H0Z" fill="#c4c4c4"/></svg>
<div class="t" style="left:1117px;top:624px">2D Pixel Perfect</div>
<div class="trir" style="left:1082px;top:649px;border-width:5px 0 5px 8px"></div>
<svg style="left:1097px;top:648px" width="15" height="12" viewBox="0 0 15 12"><path d="M0 0H5.5L7.5 2.5H14.5V11.5H0Z" fill="#c4c4c4"/></svg>
<div class="t" style="left:1117px;top:644px">2D PSD Importer</div>
<div class="trir" style="left:1082px;top:669px;border-width:5px 0 5px 8px"></div>
<svg style="left:1097px;top:668px" width="15" height="12" viewBox="0 0 15 12"><path d="M0 0H5.5L7.5 2.5H14.5V11.5H0Z" fill="#c4c4c4"/></svg>
<div class="t" style="left:1117px;top:664px">2D Sprite</div>
<div class="trir" style="left:1082px;top:689px;border-width:5px 0 5px 8px"></div>
<svg style="left:1097px;top:688px" width="15" height="12" viewBox="0 0 15 12"><path d="M0 0H5.5L7.5 2.5H14.5V11.5H0Z" fill="#c4c4c4"/></svg>
<div class="t" style="left:1117px;top:684px">2D SpriteShape</div>
<div class="trir" style="left:1082px;top:709px;border-width:5px 0 5px 8px"></div>
<svg style="left:1097px;top:708px" width="15" height="12" viewBox="0 0 15 12"><path d="M0 0H5.5L7.5 2.5H14.5V11.5H0Z" fill="#c4c4c4"/></svg>
<div class="t" style="left:1117px;top:704px">2D Tilemap Editor</div>
<div class="trir" style="left:1082px;top:729px;border-width:5px 0 5px 8px"></div>
<svg style="left:1097px;top:728px" width="15" height="12" viewBox="0 0 15 12"><path d="M0 0H5.5L7.5 2.5H14.5V11.5H0Z" fill="#c4c4c4"/></svg>
<div class="t" style="left:1117px;top:724px">2D Tilemap Extras</div>
<div class="trir" style="left:1082px;top:749px;border-width:5px 0 5px 8px"></div>
<svg style="left:1097px;top:748px" width="15" height="12" viewBox="0 0 15 12"><path d="M0 0H5.5L7.5 2.5H14.5V11.5H0Z" fill="#c4c4c4"/></svg>
<div class="t" style="left:1117px;top:744px">Burst</div>
<div class="trir" style="left:1082px;top:769px;border-width:5px 0 5px 8px"></div>
<svg style="left:1097px;top:768px" width="15" height="12" viewBox="0 0 15 12"><path d="M0 0H5.5L7.5 2.5H14.5V11.5H0Z" fill="#c4c4c4"/></svg>
<div class="t" style="left:1117px;top:764px">Custom NUnit</div>
<div class="trir" style="left:1082px;top:789px;border-width:5px 0 5px 8px"></div>
<svg style="left:1097px;top:788px" width="15" height="12" viewBox="0 0 15 12"><path d="M0 0H5.5L7.5 2.5H14.5V11.5H0Z" fill="#c4c4c4"/></svg>
<div class="t" style="left:1117px;top:784px">JetBrains Rider Editor</div>
<div class="trir" style="left:1082px;top:809px;border-width:5px 0 5px 8px"></div>
<svg style="left:1097px;top:808px" width="15" height="12" viewBox="0 0 15 12"><path d="M0 0H5.5L7.5 2.5H14.5V11.5H0Z" fill="#c4c4c4"/></svg>
<div class="t" style="left:1117px;top:804px">Mathematics</div>
<div class="trir" style="left:1082px;top:829px;border-width:5px 0 5px 8px"></div>
<svg style="left:1097px;top:828px" width="15" height="12" viewBox="0 0 15 12"><path d="M0 0H5.5L7.5 2.5H14.5V11.5H0Z" fill="#c4c4c4"/></svg>
<div class="t" style="left:1117px;top:824px">Newtonsoft Json</div>
<div class="trir" style="left:1082px;top:849px;border-width:5px 0 5px 8px"></div>
<svg style="left:1097px;top:848px" width="15" height="12" viewBox="0 0 15 12"><path d="M0 0H5.5L7.5 2.5H14.5V11.5H0Z" fill="#c4c4c4"/></svg>
<div class="t" style="left:1117px;top:844px">Services Core</div>
<div class="trir" style="left:1082px;top:869px;border-width:5px 0 5px 8px"></div>
<svg style="left:1097px;top:868px" width="15" height="12" viewBox="0 0 15 12"><path d="M0 0H5.5L7.5 2.5H14.5V11.5H0Z" fill="#c4c4c4"/></svg>
<div class="t" style="left:1117px;top:864px">Test Framework</div>
<div class="trir" style="left:1082px;top:889px;border-width:5px 0 5px 8px"></div>
<svg style="left:1097px;top:888px" width="15" height="12" viewBox="0 0 15 12"><path d="M0 0H5.5L7.5 2.5H14.5V11.5H0Z" fill="#c4c4c4"/></svg>
<div class="t" style="left:1117px;top:884px">TextMeshPro</div>

<!-- ============ INSPECTOR ============ -->
<div class="a" style="left:1440px;top:36px;width:460px;height:893px;background:#383838;border-radius:4px 4px 0 0"></div>
<div class="a" style="left:1440px;top:36px;width:460px;height:24px;background:#282828;border-radius:4px 4px 0 0"></div>
<div class="a" style="left:1440px;top:36px;width:119px;height:24px;background:#3c3c3c;border-radius:4px 4px 0 0"></div>
<svg style="left:1451px;top:43px" width="13" height="13" viewBox="0 0 13 13"><circle cx="6.5" cy="6.5" r="6.2" fill="#c8c8c8"/><rect x="5.6" y="5.3" width="1.9" height="5" fill="#3c3c3c"/><circle cx="6.55" cy="3.3" r="1.1" fill="#3c3c3c"/></svg>
<div class="t" style="left:1470px;top:39px">Inspector</div>
<svg style="left:1856px;top:41px" width="10" height="12" viewBox="0 0 10 12"><rect x="0.6" y="6.6" width="8.8" height="5.2" rx="0.5" fill="none" stroke="#c8c8c8" stroke-width="1.2"/><path d="M2 1.9Q2.6 0.7 4 0.7H6.8Q8.2 0.7 8.2 2.2V6.5" fill="none" stroke="#c8c8c8" stroke-width="1.2"/></svg>
<svg style="left:1880px;top:41px" width="4" height="13" viewBox="0 0 4 13"><circle cx="2" cy="1.5" r="1.6" fill="#c8c8c8"/><circle cx="2" cy="6.05" r="1.6" fill="#c8c8c8"/><circle cx="2" cy="10.6" r="1.6" fill="#c8c8c8"/></svg>
<div class="a" style="left:1440px;top:60px;width:460px;height:74px;background:#3e3e3e"></div>
<div class="a" style="left:1440px;top:134px;width:460px;height:1px;background:#232323"></div>
<svg style="left:1448px;top:72px" width="26" height="28" viewBox="0 0 26 28"><path d="M13 1L24.5 6.8V20.5L13 26.5L1.5 20.5V6.8Z M1.5 6.8L13 12.8L24.5 6.8 M13 12.8V26.5" fill="none" stroke="#c4c4c4" stroke-width="1.5" stroke-linejoin="round"/></svg>
<div class="tri" style="left:1473px;top:99px;border-width:5px 4.5px 0 4.5px"></div>
<div class="fld" style="left:1497px;top:74px;width:17px;height:17px;border-radius:3px"></div>
<svg style="left:1500px;top:78px" width="11" height="9" viewBox="0 0 11 9"><path d="M1 4.5L4 7.5L10 1" fill="none" stroke="#e8e8e8" stroke-width="1.8"/></svg>
<div class="fld" style="left:1522px;top:71px;width:276px;height:23px"></div>
<div class="t" style="left:1527px;top:73px;font-weight:bold;color:#e0e0e0;letter-spacing:-0.25px">Square</div>
<div class="fld" style="left:1802px;top:74px;width:17px;height:17px;border-radius:3px"></div>
<div class="t" style="left:1825px;top:73px">Static</div>
<div class="tri" style="left:1883px;top:80px;border-width:6px 5px 0 5px"></div>
<div class="t" style="left:1492px;top:102px">Tag</div>
<div class="dd" style="left:1526px;top:102px;width:159px;height:22px"></div><div class="t" style="left:1531px;top:102px">Untagged</div><div class="tri" style="left:1668px;top:110px"></div>
<div class="t" style="left:1701px;top:102px">Layer</div>
<div class="dd" style="left:1748px;top:102px;width:146px;height:22px"></div><div class="t" style="left:1753px;top:102px">Default</div><div class="tri" style="left:1877px;top:110px"></div>
<div class="a" style="left:1440px;top:135px;width:460px;height:26px;background:#3e3e3e"></div>
<div class="a" style="left:1440px;top:161px;width:460px;height:1px;background:#2e2e2e"></div>
<div class="trid" style="left:1448px;top:144px;border-width:8px 5px 0 5px;border-top-color:#7a7a7a"></div>
<svg style="left:1467px;top:140px" width="17" height="15" viewBox="0 0 17 15"><path d="M8.5 1.2V5.3" stroke="#8ed84a" stroke-width="2.6" stroke-linecap="round"/><path d="M6.3 8.6L2.6 10.6" stroke="#4ab4ea" stroke-width="2.6" stroke-linecap="round"/><path d="M10.7 8.6L14.4 10.6" stroke="#ea6a3a" stroke-width="2.6" stroke-linecap="round"/></svg>
<div class="t" style="left:1515px;top:138px;font-weight:bold;letter-spacing:-0.1px">Transform</div>
<svg style="left:1827px;top:142px" width="13" height="13" viewBox="0 0 13 13"><circle cx="6.5" cy="6.5" r="6.2" fill="#d0d0d0"/><path d="M4.3 5Q4.3 2.8 6.5 2.8Q8.7 2.8 8.7 4.8Q8.7 6 7.3 6.6Q6.5 7 6.5 8" fill="none" stroke="#383838" stroke-width="1.6"/><circle cx="6.5" cy="10" r="1" fill="#383838"/></svg>
<svg style="left:1852px;top:142px" width="14" height="13" viewBox="0 0 14 13"><path d="M0 3.5H13M0 9.5H13" stroke="#c8c8c8" stroke-width="1.2"/><rect x="7.5" y="0.5" width="2.2" height="6" fill="#c8c8c8"/><rect x="3" y="6.5" width="2.2" height="6" fill="#c8c8c8"/></svg>
<svg style="left:1882px;top:142px" width="4" height="13" viewBox="0 0 4 13"><circle cx="2" cy="1.5" r="1.6" fill="#c8c8c8"/><circle cx="2" cy="6.05" r="1.6" fill="#c8c8c8"/><circle cx="2" cy="10.6" r="1.6" fill="#c8c8c8"/></svg>
<div class="t" style="left:1464px;top:168px">Position</div>
<div class="t" style="left:1624px;top:168px">X</div>
<div class="fld" style="left:1641px;top:168px;width:68px;height:21px"></div><div class="t" style="left:1645px;top:169px">-1037</div>
<div class="t" style="left:1717px;top:168px">Y</div>
<div class="fld" style="left:1734px;top:168px;width:68px;height:21px"></div><div class="t" style="left:1738px;top:169px">258</div>
<div class="t" style="left:1809px;top:168px">Z</div>
<div class="fld" style="left:1826px;top:168px;width:68px;height:21px"></div><div class="t" style="left:1830px;top:169px">0</div>
<div class="t" style="left:1464px;top:193px">Rotation</div>
<div class="t" style="left:1624px;top:193px">X</div>
<div class="fld" style="left:1641px;top:193px;width:68px;height:21px"></div><div class="t" style="left:1645px;top:194px">0</div>
<div class="t" style="left:1717px;top:193px">Y</div>
<div class="fld" style="left:1734px;top:193px;width:68px;height:21px"></div><div class="t" style="left:1738px;top:194px">0</div>
<div class="t" style="left:1809px;top:193px">Z</div>
<div class="fld" style="left:1826px;top:193px;width:68px;height:21px"></div><div class="t" style="left:1830px;top:194px">0</div>
<div class="t" style="left:1464px;top:218px">Scale</div>
<div class="t" style="left:1624px;top:218px">X</div>
<div class="fld" style="left:1641px;top:218px;width:68px;height:21px"></div><div class="t" style="left:1645px;top:219px">100</div>
<div class="t" style="left:1717px;top:218px">Y</div>
<div class="fld" style="left:1734px;top:218px;width:68px;height:21px"></div><div class="t" style="left:1738px;top:219px">100</div>
<div class="t" style="left:1809px;top:218px">Z</div>
<div class="fld" style="left:1826px;top:218px;width:68px;height:21px"></div><div class="t" style="left:1830px;top:219px">1</div>
<svg style="left:1596px;top:221px" width="17" height="13" viewBox="0 0 17 13"><path d="M6 2.5H3.5Q0.8 2.5 0.8 6.5Q0.8 10.5 3.5 10.5H6M11 2.5H13.5Q16.2 2.5 16.2 6.5Q16.2 10.5 13.5 10.5H11M5 6.5H12" fill="none" stroke="#c8c8c8" stroke-width="1.3"/><path d="M3 0.5L14 12.5" stroke="#c8c8c8" stroke-width="1.3"/></svg>
<div class="a" style="left:1440px;top:251px;width:460px;height:1px;background:#2a2a2a"></div>
<div class="a" style="left:1440px;top:252px;width:460px;height:26px;background:#3e3e3e"></div>
<div class="a" style="left:1440px;top:278px;width:460px;height:1px;background:#2e2e2e"></div>
<div class="trid" style="left:1448px;top:261px;border-width:8px 5px 0 5px;border-top-color:#7a7a7a"></div>
<svg style="left:1466px;top:257px" width="18" height="17" viewBox="0 0 18 17"><rect x="1.5" y="1.5" width="14" height="14" fill="none" stroke="#9a7ae8" stroke-width="1"/><circle cx="1.5" cy="1.5" r="1.5" fill="#9a7ae8"/><circle cx="15.5" cy="1.5" r="1.5" fill="#9a7ae8"/><circle cx="1.5" cy="15.5" r="1.5" fill="#9a7ae8"/><circle cx="15.5" cy="15.5" r="1.5" fill="#9a7ae8"/><circle cx="8.5" cy="7" r="3" fill="#c8c8c8"/><ellipse cx="10" cy="12.5" rx="4.5" ry="3" fill="none" stroke="#c8c8c8" stroke-width="1.5"/></svg>
<div class="fld" style="left:1490px;top:257px;width:17px;height:17px;border-radius:3px"></div>
<svg style="left:1493px;top:261px" width="11" height="9" viewBox="0 0 11 9"><path d="M1 4.5L4 7.5L10 1" fill="none" stroke="#e8e8e8" stroke-width="1.8"/></svg>
<div class="t" style="left:1515px;top:255px;font-weight:bold;letter-spacing:-0.15px">Sprite Renderer</div>
<svg style="left:1827px;top:259px" width="13" height="13" viewBox="0 0 13 13"><circle cx="6.5" cy="6.5" r="6.2" fill="#d0d0d0"/><path d="M4.3 5Q4.3 2.8 6.5 2.8Q8.7 2.8 8.7 4.8Q8.7 6 7.3 6.6Q6.5 7 6.5 8" fill="none" stroke="#383838" stroke-width="1.6"/><circle cx="6.5" cy="10" r="1" fill="#383838"/></svg>
<svg style="left:1852px;top:259px" width="14" height="13" viewBox="0 0 14 13"><path d="M0 3.5H13M0 9.5H13" stroke="#c8c8c8" stroke-width="1.2"/><rect x="7.5" y="0.5" width="2.2" height="6" fill="#c8c8c8"/><rect x="3" y="6.5" width="2.2" height="6" fill="#c8c8c8"/></svg>
<svg style="left:1882px;top:259px" width="4" height="13" viewBox="0 0 4 13"><circle cx="2" cy="1.5" r="1.6" fill="#c8c8c8"/><circle cx="2" cy="6.05" r="1.6" fill="#c8c8c8"/><circle cx="2" cy="10.6" r="1.6" fill="#c8c8c8"/></svg>
<div class="t" style="left:1464px;top:285px">Sprite</div>
<div class="fld" style="left:1622px;top:284px;width:272px;height:22px"></div>
<div class="a" style="left:1871px;top:285px;width:22px;height:20px;background:#333333;border-radius:0 3px 3px 0"></div>
<svg style="left:1876px;top:289px" width="13" height="13" viewBox="0 0 13 13"><circle cx="6.5" cy="6.5" r="5.8" fill="none" stroke="#c8c8c8" stroke-width="1.2"/><rect x="5" y="5" width="3" height="3" fill="#c8c8c8"/></svg>
<svg style="left:1627px;top:289px" width="13" height="12" viewBox="0 0 13 12"><rect x="1" y="1" width="10.5" height="10" fill="none" stroke="#9a7ae8" stroke-width="1"/><rect x="3.5" y="3.5" width="5.5" height="5" fill="#c8c8c8"/></svg>
<div class="t" style="left:1642px;top:285px">Square</div>
<div class="t" style="left:1464px;top:310px">Color</div>
<div class="fld" style="left:1622px;top:309px;width:272px;height:22px"></div>
<div class="a" style="left:1624px;top:310px;width:248px;height:15px;background:#f80000"></div>
<div class="a" style="left:1624px;top:325px;width:248px;height:4px;background:#ffffff"></div>
<svg style="left:1877px;top:313px" width="14" height="15" viewBox="0 0 14 15"><path d="M1 14.2L1.5 11.5L7.5 5.5L9.5 7.5L3.5 13.5Z" fill="#c8c8c8"/><path d="M6.5 4.5L8 3L9.5 4.5L11.2 1.2Q12.3 0.3 13.2 1.2Q14 2.2 12.8 3.2L10.5 5.5L12 7L10.5 8.5Z" fill="#c8c8c8"/></svg>
<div class="t" style="left:1464px;top:335px">Flip</div>
<div class="fld" style="left:1622px;top:338px;width:17px;height:17px;border-radius:3px"></div>
<div class="t" style="left:1645px;top:335px">X</div>
<div class="fld" style="left:1660px;top:338px;width:17px;height:17px;border-radius:3px"></div>
<div class="t" style="left:1682px;top:335px">Y</div>
<div class="t" style="left:1464px;top:360px">Draw Mode</div>
<div class="dd" style="left:1622px;top:360px;width:272px;height:22px"></div><div class="t" style="left:1627px;top:360px">Simple</div><div class="tri" style="left:1877px;top:368px"></div>
<div class="t" style="left:1464px;top:385px">Mask Interaction</div>
<div class="dd" style="left:1622px;top:385px;width:272px;height:22px"></div><div class="t" style="left:1627px;top:385px">None</div><div class="tri" style="left:1877px;top:393px"></div>
<div class="t" style="left:1464px;top:410px">Sprite Sort Point</div>
<div class="dd" style="left:1622px;top:410px;width:272px;height:22px"></div><div class="t" style="left:1627px;top:410px">Center</div><div class="tri" style="left:1877px;top:418px"></div>
<div class="t" style="left:1464px;top:436px">Material</div>
<div class="fld" style="left:1622px;top:435px;width:272px;height:22px"></div>
<div class="a" style="left:1871px;top:436px;width:22px;height:20px;background:#333333;border-radius:0 3px 3px 0"></div>
<svg style="left:1876px;top:440px" width="13" height="13" viewBox="0 0 13 13"><circle cx="6.5" cy="6.5" r="5.8" fill="none" stroke="#c8c8c8" stroke-width="1.2"/><rect x="5" y="5" width="3" height="3" fill="#c8c8c8"/></svg>
<svg style="left:1627px;top:440px" width="12" height="12" viewBox="0 0 12 12"><circle cx="6" cy="6" r="5.8" fill="#5cc8f0"/><path d="M2.5 4.5Q4 1.5 7.5 2" fill="none" stroke="#2a2a2a" stroke-width="1.2"/><circle cx="6.5" cy="6.5" r="3.5" fill="#3a90c8" opacity="0.0"/></svg>
<div class="t" style="left:1642px;top:436px">Sprites-Default</div>
<div class="trid" style="left:1448px;top:466px;border-width:8px 5px 0 5px;border-top-color:#7a7a7a"></div>
<div class="t" style="left:1465px;top:460px;font-weight:bold;letter-spacing:-0.15px">Additional Settings</div>
<div class="t" style="left:1482px;top:485px">Sorting Layer</div>
<div class="dd" style="left:1622px;top:485px;width:272px;height:22px"></div><div class="t" style="left:1627px;top:485px">Default</div><div class="tri" style="left:1877px;top:493px"></div>
<div class="t" style="left:1482px;top:511px">Order in Layer</div>
<div class="fld" style="left:1622px;top:509px;width:272px;height:22px"></div><div class="t" style="left:1626px;top:510px">0</div>
<div class="a" style="left:1440px;top:543px;width:460px;height:1px;background:#262626"></div>
<div class="a" style="left:1461px;top:552px;width:38px;height:40px;background:#353535"></div>
<div class="a" style="left:1465px;top:557px;width:30px;height:30px;background:#ffffff"></div>
<div class="t" style="left:1509px;top:550px;color:#c4c4c4;letter-spacing:0.8px">Sprites-Default (Material)</div>
<svg style="left:1863px;top:554px" width="13" height="13" viewBox="0 0 13 13"><circle cx="6.5" cy="6.5" r="6.2" fill="#d0d0d0"/><path d="M4.3 5Q4.3 2.8 6.5 2.8Q8.7 2.8 8.7 4.8Q8.7 6 7.3 6.6Q6.5 7 6.5 8" fill="none" stroke="#383838" stroke-width="1.6"/><circle cx="6.5" cy="10" r="1" fill="#383838"/></svg>
<svg style="left:1888px;top:554px" width="4" height="13" viewBox="0 0 4 13"><circle cx="2" cy="1.5" r="1.6" fill="#c8c8c8"/><circle cx="2" cy="6.05" r="1.6" fill="#c8c8c8"/><circle cx="2" cy="10.6" r="1.6" fill="#c8c8c8"/></svg>
<div class="t" style="left:1506px;top:580px;color:#8a8a8a">Shader</div>
<div class="dd" style="left:1571px;top:581px;width:262px;height:20px;background:#454545;border-color:#353535"></div>
<div class="t" style="left:1575px;top:580px;color:#9a9a9a">Sprites/Default</div>
<div class="tri" style="left:1816px;top:588px;border-top-color:#8a8a8a"></div>
<div class="dd" style="left:1838px;top:581px;width:55px;height:20px;background:#454545;border-color:#353535"></div>
<div class="t" style="left:1845px;top:580px;color:#9a9a9a">Edit...</div>
<div class="trir" style="left:1449px;top:593px;border-width:5px 0 5px 9px;border-left-color:#6a6a6a"></div>
<div class="a" style="left:1440px;top:612px;width:460px;height:1px;background:#262626"></div>
<div class="a" style="left:1440px;top:626px;width:460px;height:1px;background:#262626"></div>
<div class="a" style="left:1527px;top:638px;width:285px;height:28px;background:#585858;border:1px solid #2c2c2c;border-radius:3px"></div>
<div class="t" style="left:1527px;top:643px;width:285px;text-align:center">Add Component</div>

<!-- ============ STATUS BAR ============ -->
<svg style="left:1px;top:933px" width="17" height="17" viewBox="0 0 17 17"><path d="M8.5 0.8A7.7 7.2 0 0 0 3 13.5L2 16L6.5 14.6A7.7 7.2 0 1 0 8.5 0.8Z" fill="#f0f0f0"/><path d="M8.5 3.5V9.5" stroke="#191919" stroke-width="2.2"/><circle cx="8.5" cy="12" r="1.2" fill="#191919"/></svg>
<div class="t" style="left:23px;top:933px">[TMP Essential Resources] have been imported.</div>
<div class="a" style="left:1769px;top:930px;width:1px;height:25px;background:#222"></div>
<div class="a" style="left:1802px;top:930px;width:1px;height:25px;background:#222"></div>
<div class="a" style="left:1835px;top:930px;width:1px;height:25px;background:#222"></div>
<div class="a" style="left:1867px;top:930px;width:1px;height:25px;background:#222"></div>
<svg style="left:1776px;top:935px" width="18" height="18" viewBox="0 0 18 18"><ellipse cx="9" cy="10.5" rx="5" ry="6" fill="#c8c8c8"/><circle cx="9" cy="4.5" r="2.8" fill="#c8c8c8"/><path d="M2 6L4.5 8M16 6L13.5 8M1.5 11H4M16.5 11H14M2 16L4.5 14M16 16L13.5 14" stroke="#c8c8c8" stroke-width="1.2"/><path d="M2 1L16.5 17" stroke="#191919" stroke-width="2"/><path d="M3 1L17 17" stroke="#c8c8c8" stroke-width="1"/></svg>
<svg style="left:1809px;top:935px" width="18" height="18" viewBox="0 0 18 18"><ellipse cx="8.5" cy="3.5" rx="7" ry="3" fill="#c8c8c8"/><path d="M1.5 5.5Q8.5 9.5 15.5 5.5V8.5Q8.5 12.5 1.5 8.5Z M1.5 10.5Q8.5 14.5 15.5 10.5V13.5Q8.5 17.5 1.5 13.5Z" fill="#c8c8c8"/><path d="M3 2L17 17" stroke="#191919" stroke-width="2"/><path d="M4 2L17 16.5" stroke="#c8c8c8" stroke-width="1"/></svg>
<svg style="left:1841px;top:935px" width="18" height="18" viewBox="0 0 18 18"><circle cx="9" cy="9" r="7" fill="none" stroke="#c8c8c8" stroke-width="1.3"/><path d="M9 4V14M6.5 6.5Q9 5 11.5 6.5M6.5 11.5Q9 13 11.5 11.5" stroke="#c8c8c8" stroke-width="1.2" fill="none"/><path d="M14 1L17 1L17 4Z M1 14V17H4Z" fill="#c8c8c8"/><path d="M2 1L17 17" stroke="#191919" stroke-width="2"/><path d="M3 1L17 16" stroke="#c8c8c8" stroke-width="1"/></svg>
<svg style="left:1873px;top:935px" width="18" height="18" viewBox="0 0 18 18"><circle cx="9" cy="9" r="8" fill="none" stroke="#c8c8c8" stroke-width="1.2"/><path d="M5.5 9L8 11.5L12.5 6.5" fill="none" stroke="#c8c8c8" stroke-width="1.8"/></svg>

<!-- ============ ANNOTATIONS (inspector) ============ -->
<svg style="left:0;top:0" width="1910" height="960" viewBox="0 0 1910 960">
<path d="M1431.5 195L1451 193.6L1546 194.2L1629 193Q1645 194 1650 197L1692 201Q1715 205 1734 206L1790 205Q1798 206 1799 213L1799 229Q1798 236 1790 238L1755 245Q1730 255 1713 258.5Q1690 261 1650 259.6L1598 253Q1580 249.5 1566 249L1504 247.4Q1480 246 1472 242.8Q1460 238 1456 232Q1450 224 1449.3 217.7L1449.3 207Q1447 206 1446 206.2L1439 203Z" fill="none" stroke="#e11b1b" stroke-width="5" stroke-linecap="round" stroke-linejoin="round"/>
<path d="M1455 292Q1462 291 1470 292.5L1509 294.3Q1525 295 1538 300L1612 300.4Q1650 299 1686 294Q1715 288 1748 280L1809 278.3Q1850 278 1878 283Q1893 286 1896 292L1903 311.5Q1907 318 1906 323Q1900 329 1888 328.7L1809 332.4L1686 332.4Q1640 333 1588 338.6L1514 339.8Q1480 341 1465 335Q1456 331 1455 324L1454 294Z" fill="none" stroke="#e11b1b" stroke-width="5" stroke-linecap="round" stroke-linejoin="round"/>
</svg>

</div></body></html>
